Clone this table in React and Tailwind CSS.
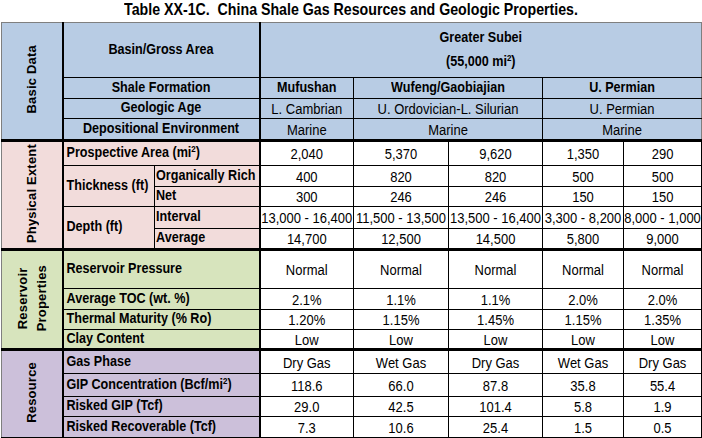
import React from 'react';

// Table XX-1C, drawn as a regular HTML table with Excel-like fills
const blue = 'bg-[#b8cce4]';
const pink = 'bg-[#f2dcdb]';
const green = 'bg-[#d7e4bd]';
const purple = 'bg-[#ccc0da]';

const physical = [
  { label: 'Prospective Area (mi', sup: '2', h: 'h-[25px]', vals: ['2,040', '5,370', '9,620', '1,350', '290'] },
  { group: 'Thickness (ft)', sub: 'Organically Rich', h: 'h-[21px]', vals: ['400', '820', '820', '500', '500'] },
  { sub: 'Net', h: 'h-[20px]', vals: ['300', '246', '246', '150', '150'] },
  { group: 'Depth (ft)', sub: 'Interval', h: 'h-[22px]', vals: ['13,000 - 16,400', '11,500 - 13,500', '13,500 - 16,400', '3,300 - 8,200', '8,000 - 1,000'] },
  { sub: 'Average', h: 'h-[21px]', vals: ['14,700', '12,500', '14,500', '5,800', '9,000'] },
];

const reservoir = [
  { label: 'Reservoir Pressure', h: 'h-[39px]', vals: ['Normal', 'Normal', 'Normal', 'Normal', 'Normal'] },
  { label: 'Average TOC (wt. %)', h: 'h-[21px]', vals: ['2.1%', '1.1%', '1.1%', '2.0%', '2.0%'] },
  { label: 'Thermal Maturity (% Ro)', h: 'h-[20px]', vals: ['1.20%', '1.15%', '1.45%', '1.15%', '1.35%'] },
  { label: 'Clay Content', h: 'h-[20px]', vals: ['Low', 'Low', 'Low', 'Low', 'Low'] },
];

const resource = [
  { label: 'Gas Phase', h: 'h-[24px]', vals: ['Dry Gas', 'Wet Gas', 'Dry Gas', 'Wet Gas', 'Dry Gas'] },
  { label: 'GIP Concentration (Bcf/mi', sup: '2', h: 'h-[23px]', vals: ['118.6', '66.0', '87.8', '35.8', '55.4'] },
  { label: 'Risked GIP (Tcf)', h: 'h-[20px]', vals: ['29.0', '42.5', '101.4', '5.8', '1.9'] },
  { label: 'Risked Recoverable (Tcf)', h: 'h-[21px]', vals: ['7.3', '10.6', '25.4', '1.5', '0.5'] },
];

// the source font is a tall, narrow face: stretch the text a little upward
const T = ({ children }) => <span className="inline-block scale-y-[1.12]">{children}</span>;

const Sup = ({ children }) => (
  <span className="text-[8px] leading-none align-[5px]">{children}</span>
);

const SideText = ({ children }) => (
  <div className="inline-block [writing-mode:vertical-rl] rotate-180 text-center font-bold text-[13px] leading-[19px] tracking-[0.2px]">
    {children}
  </div>
);

const Side = ({ rows, fill, children }) => (
  <td
    rowSpan={rows}
    className={`${fill} border border-black border-r-2 border-l-[#7f7f7f] border-t-[3px] border-t-double p-0 align-middle text-center`}
  >
    <SideText>{children}</SideText>
  </td>
);

const Values = ({ vals, first }) =>
  vals.map((v, i) => (
    <td
      key={i}
      className={`border border-black p-0 text-center whitespace-nowrap bg-white ${
        first ? 'border-t-[3px] border-t-double' : ''
      }`}
    >
      <T>{v}</T>
    </td>
  ));

const Section = ({ rows, title, fill }) =>
  rows.map((r, i) => (
    <tr key={i} className={r.h}>
      {i === 0 && (
        <Side rows={rows.length} fill={fill}>
          {title}
        </Side>
      )}
      <td
        colSpan={2}
        className={`${fill} border border-black border-r-2 p-0 pl-[3px] font-bold text-[12.6px] whitespace-nowrap ${
          i === 0 ? 'border-t-[3px] border-t-double' : ''
        }`}
      >
        <T>
          {r.label}
          {r.sup && <Sup>{r.sup}</Sup>}
          {r.sup && ')'}
        </T>
      </td>
      <Values vals={r.vals} first={i === 0} />
    </tr>
  ));

export default function App() {
  return (
    <div className="w-[702px] h-[438px] bg-white text-black overflow-hidden [font-family:'Liberation_Sans',Arial,sans-serif]">
      <div className="h-[22px] pt-[3px] text-center text-[14.2px] leading-[17px] font-bold">
        <span className="inline-block scale-y-[1.22] origin-bottom">
          Table XX-1C.&nbsp; China Shale Gas Resources and Geologic Properties.
        </span>
      </div>

      <table className="ml-[1px] w-[700px] table-fixed border-collapse text-[13px] leading-[15px]">
        <colgroup>
          <col className="w-[61px]" />
          <col className="w-[92px]" />
          <col className="w-[105px]" />
          <col className="w-[94px]" />
          <col className="w-[95px]" />
          <col className="w-[94px]" />
          <col className="w-[81px]" />
          <col className="w-[78px]" />
        </colgroup>
        <tbody>
          {/* Basic data */}
          <tr className="h-[55px]">
            <td
              rowSpan={4}
              className={`${blue} border border-black border-r-2 border-t-[#7f7f7f] border-l-[#7f7f7f] p-0 align-middle text-center`}
            >
              <SideText>Basic Data</SideText>
            </td>
            <td colSpan={2} className={`${blue} border border-black border-r-2 border-t-[#7f7f7f] p-0 text-center font-bold text-[12.6px]`}>
              <T>Basin/Gross Area</T>
            </td>
            <td colSpan={5} className={`${blue} border border-black border-t-[#7f7f7f] border-r-[#7f7f7f] p-0 text-center font-bold text-[12.6px] leading-[24px]`}>
              <div><T>Greater Subei</T></div>
              <div>
                <T>(55,000 mi<Sup>2</Sup>)</T>
              </div>
            </td>
          </tr>
          <tr className="h-[21px]">
            <td colSpan={2} className={`${blue} border border-black border-r-2 p-0 text-center font-bold text-[12.6px]`}><T>Shale Formation</T></td>
            <td className={`${blue} border border-black p-0 text-center font-bold text-[12.6px]`}><T>Mufushan</T></td>
            <td colSpan={2} className={`${blue} border border-black p-0 text-center font-bold text-[12.6px]`}><T>Wufeng/Gaobiajian</T></td>
            <td colSpan={2} className={`${blue} border border-black border-r-[#7f7f7f] p-0 text-center font-bold text-[12.6px]`}><T>U. Permian</T></td>
          </tr>
          <tr className="h-[20px]">
            <td colSpan={2} className={`${blue} border border-black border-r-2 p-0 text-center font-bold text-[12.6px]`}><T>Geologic Age</T></td>
            <td className={`${blue} border border-black p-0 text-center`}><T>L. Cambrian</T></td>
            <td colSpan={2} className={`${blue} border border-black p-0 text-center`}><T>U. Ordovician-L. Silurian</T></td>
            <td colSpan={2} className={`${blue} border border-black border-r-[#7f7f7f] p-0 text-center`}><T>U. Permian</T></td>
          </tr>
          <tr className="h-[22px]">
            <td colSpan={2} className={`${blue} border border-black border-r-2 p-0 text-center font-bold text-[12.6px]`}><T>Depositional Environment</T></td>
            <td className={`${blue} border border-black p-0 text-center`}><T>Marine</T></td>
            <td colSpan={2} className={`${blue} border border-black p-0 text-center`}><T>Marine</T></td>
            <td colSpan={2} className={`${blue} border border-black border-r-[#7f7f7f] p-0 text-center`}><T>Marine</T></td>
          </tr>

          {/* Physical extent */}
          {physical.map((r, i) => (
            <tr key={i} className={r.h}>
              {i === 0 && (
                <Side rows={5} fill={pink}>
                  Physical Extent
                </Side>
              )}
              {r.label ? (
                <td colSpan={2} className={`${pink} border border-black border-r-2 border-t-[3px] border-t-double p-0 pl-[3px] font-bold text-[12.6px] whitespace-nowrap`}>
                  <T>
                    {r.label}
                    <Sup>{r.sup}</Sup>)
                  </T>
                </td>
              ) : (
                <>
                  {r.group && (
                    <td rowSpan={2} className={`${pink} border border-black p-0 pl-[3px] font-bold text-[12.6px] whitespace-nowrap`}>
                      <T>{r.group}</T>
                    </td>
                  )}
                  <td className={`${pink} border border-black border-r-2 p-0 pl-[1px] font-bold text-[12.6px] whitespace-nowrap`}>
                    <T>{r.sub}</T>
                  </td>
                </>
              )}
              <Values vals={r.vals} first={i === 0} />
            </tr>
          ))}

          <Section rows={reservoir} title={<>Reservoir<br />Properties</>} fill={green} />
          <Section rows={resource} title="Resource" fill={purple} />
        </tbody>
      </table>
    </div>
  );
}
